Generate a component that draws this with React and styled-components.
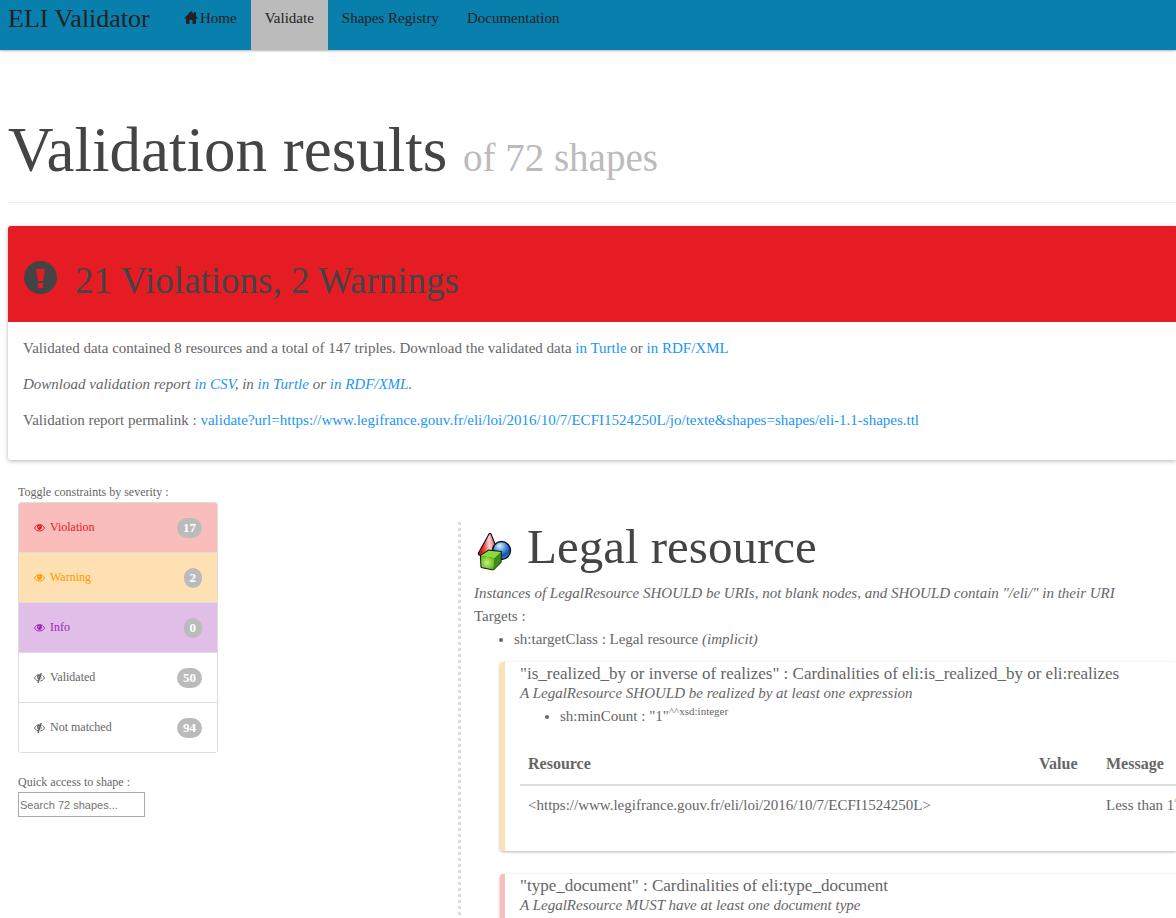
import React from 'react';
import styled, { createGlobalStyle } from 'styled-components';

const Global = createGlobalStyle`
  *, *::before, *::after { box-sizing: border-box; }
  body {
    margin: 0;
    background: #fff;
    color: #666;
    font-family: "Liberation Serif", serif;
    font-size: 15px;
    line-height: 23px;
  }
  a { color: #2196f3; text-decoration: none; }
  p, h1, h2, h3, ul { margin: 0; }
`;

const Page = styled.div`
  overflow-x: hidden;
`;

const Navbar = styled.nav`
  display: flex;
  height: 50px;
  padding-left: 8px;
  background: #087fac;
  box-shadow: 0 1px 2px rgba(0, 0, 0, 0.3);
`;

const Brand = styled.a`
  width: 162px;
  padding-top: 7px;
  color: #222;
  font-size: 26px;
  white-space: nowrap;
`;

const NavLink = styled.a`
  display: flex;
  align-items: flex-start;
  gap: 2px;
  padding: 7px 14px;
  color: #222;
  background: ${(p) => (p.$active ? '#bbb' : 'transparent')};
  white-space: nowrap;
`;

const HomeSvg = styled.svg`
  width: 14px;
  height: 14px;
  margin-top: 4px;
`;

const Body = styled.main`
  padding-left: 8px;
`;

const PageHeader = styled.header`
  padding: 64px 0 16px;
  border-bottom: 1px solid #eee;
`;

const PageTitle = styled.h1`
  height: 72px;
  color: #444;
  font-size: 63px;
  font-weight: 400;
  line-height: 72px;
  white-space: nowrap;
`;

const Muted = styled.small`
  color: #bbb;
  font-size: 39px;
`;

const Panel = styled.section`
  margin-top: 23px;
  border-radius: 3px 0 0 3px;
  box-shadow: 0 1px 4px rgba(0, 0, 0, 0.3);
`;

const PanelHead = styled.div`
  display: flex;
  gap: 18px;
  height: 96px;
  padding: 35px 16px 0;
  border-radius: 3px 0 0 0;
  background: #e51c23;
  color: #444;
`;

const AlertSvg = styled.svg`
  width: 33px;
  height: 33px;
`;

const PanelTitle = styled.h2`
  font-size: 37px;
  font-weight: 400;
  line-height: 40px;
`;

const PanelBody = styled.div`
  display: flex;
  flex-direction: column;
  gap: 13px;
  padding: 15px 15px 28px;
`;

const Columns = styled.div`
  display: flex;
  margin-top: 21px;
`;

const Sidebar = styled.aside`
  flex: 0 0 450px;
  padding: 1px 0 0 10px;
  font-size: 12px;
`;

const SeverityList = styled.div`
  width: 200px;
  margin-bottom: 19px;
  border: 1px solid #ddd;
  border-radius: 3px;
  overflow: hidden;
`;

const SeverityItem = styled.button`
  display: flex;
  align-items: center;
  gap: 5px;
  width: 100%;
  height: 50px;
  padding: 0 15px;
  border: 0;
  border-bottom: 1px solid #ddd;
  background: ${(p) => p.$bg};
  color: ${(p) => p.$fg};
  font: inherit;
  text-align: left;
  &:last-child { height: 49px; border-bottom: 0; }
`;

const EyeSvg = styled.svg`
  width: 11px;
  height: 10px;
`;

const Badge = styled.span`
  margin-left: auto;
  padding: 0 6px;
  border-radius: 10px;
  background: #bbb;
  color: #fff;
  font-size: 13px;
  font-weight: 700;
  line-height: 20px;
`;

const Caption = styled.label`
  display: block;
  line-height: 20px;
`;

const Search = styled.input`
  display: block;
  width: 127px;
  height: 25px;
  padding: 1px;
  border: 1px solid #a9a9a9;
  font-family: "Liberation Sans", sans-serif;
  font-size: 11px;
  &::placeholder { color: #757575; }
`;

const Shape = styled.section`
  flex: 1;
  min-width: 0;
  margin-top: 41px;
  padding-left: 16px;
  background: repeating-linear-gradient(to bottom, #ddd 0 3px, transparent 3px 6px) left top / 3px 100% no-repeat;
`;

const ShapeHead = styled.div`
  display: flex;
  align-items: center;
  gap: 13px;
  height: 60px;
  padding: 0 0 10px 2px;
`;

const ShapeTitle = styled.h2`
  color: #444;
  font-size: 49px;
  font-weight: 400;
  line-height: 50px;
`;

const ShapesSvg = styled.svg`
  flex: none;
  width: 38px;
  height: 40px;
  margin-top: 12px;
`;

const Description = styled.p`
  line-height: ${(p) => (p.$tight ? '18px' : '23px')};
  font-style: italic;
`;

const Bullets = styled.ul`
  padding-left: 40px;
`;

const Constraint = styled.article`
  min-height: 189px;
  margin: 11px 0 23px 26px;
  padding: 2px 0 0 15px;
  border-left: 5px solid ${(p) => p.$accent};
  border-radius: 3px 0 0 3px;
  box-shadow: 0 1px 3px rgba(0, 0, 0, 0.3);

  ${Bullets} { margin-top: 3px; }
`;

const ConstraintTitle = styled.h3`
  font-size: 17px;
  font-weight: 400;
  line-height: 20px;
`;

const Sup = styled.sup`
  font-size: 11px;
  line-height: 0;
`;

const Results = styled.table`
  width: 100%;
  margin-top: 14px;
  border-collapse: collapse;
  table-layout: fixed;
`;

const Th = styled.th`
  width: ${(p) => p.$w || 'auto'};
  height: 43px;
  padding: 0 8px;
  border-bottom: 2px solid #ddd;
  font-size: 16px;
  text-align: left;
`;

const Td = styled.td`
  height: 40px;
  padding: 0 8px;
  white-space: nowrap;
`;

const severities = [
  { name: 'Violation', count: 17, bg: '#f9bdbb', fg: '#e51c23', open: true },
  { name: 'Warning', count: 2, bg: '#ffe0b2', fg: '#ff9800', open: true },
  { name: 'Info', count: 0, bg: '#e1bee7', fg: '#9c27b0', open: true },
  { name: 'Validated', count: 50, bg: '#fff', fg: '#666', open: false },
  { name: 'Not matched', count: 94, bg: '#fff', fg: '#666', open: false },
];

const Eye = ({ open }) => (
  <EyeSvg viewBox="0 0 22 20" aria-hidden="true">
    <path d="M1 10C5 1 17 1 21 10C17 18 5 18 1 10Z" fill="none" stroke="currentColor" strokeWidth="2" />
    <path d="M7 4H15Q17 8 15 11Q13 14 11 14Q9 14 7 11Q5 8 7 4Z" fill="currentColor" />
    <path d="M8.5 9Q9 6.5 11 6.5" fill="none" stroke="#fff" strokeOpacity="0.8" strokeWidth="1.4" />
    {!open && <path d="M14.5 0L8 20" stroke="currentColor" strokeWidth="3" />}
    {!open && <path d="M17 1L10.5 20" stroke="#fff" strokeWidth="1.6" />}
  </EyeSvg>
);

const ShapesLogo = () => (
  <ShapesSvg viewBox="0 0 38 40" aria-hidden="true">
    <defs>
      <linearGradient id="cone" x1="0" y1="0.6" x2="1" y2="0.5">
        <stop offset="0" stopColor="#c80000" />
        <stop offset="0.3" stopColor="#f04040" />
        <stop offset="0.6" stopColor="#ffd8d8" />
        <stop offset="1" stopColor="#d03030" />
      </linearGradient>
      <radialGradient id="ball" cx="0.4" cy="0.25" r="0.75">
        <stop offset="0" stopColor="#e4f2ff" />
        <stop offset="0.4" stopColor="#5a9ce8" />
        <stop offset="0.75" stopColor="#1450b8" />
        <stop offset="1" stopColor="#3c8cf0" />
      </radialGradient>
      <radialGradient id="front" cx="0.45" cy="0.5" r="0.65">
        <stop offset="0" stopColor="#c4f078" />
        <stop offset="1" stopColor="#54b014" />
      </radialGradient>
    </defs>
    <path d="M13 1Q14 0 15 1L21 16L17 25L3 22Q2 21 3 19Z" fill="url(#cone)" stroke="#111" strokeWidth="1.2" />
    <circle cx="25.5" cy="17.5" r="9" fill="url(#ball)" stroke="#111" strokeWidth="1.4" />
    <path d="M4.5 22.5L12.5 17L25.5 18.5L25 29.5L17.5 37L5 34.5Z" fill="#286e08" stroke="#111" strokeWidth="1" strokeLinejoin="round" />
    <path d="M5 22.7L12.7 17.7L25 19L18.7 25.3Z" fill="#8cdc3c" />
    <path d="M5 22.7L18.7 25.3L17.5 36.5L5.5 34Z" fill="url(#front)" />
    <path d="M18.7 25.3L25 19L24.5 29.2L17.5 36.5Z" fill="#3f8f14" />
  </ShapesSvg>
);

export default function App() {
  return (
    <Page>
      <Global />
      <Navbar>
        <Brand href="#">ELI Validator</Brand>
        <NavLink href="#">
          <HomeSvg viewBox="0 0 14 14" aria-hidden="true">
            <path d="M7 0L10 3V1H12V5L14 7.5H12V13H8.5V9H5.5V13H2V7.5H0Z" fill="currentColor" />
          </HomeSvg>
          Home
        </NavLink>
        <NavLink href="#" $active>Validate</NavLink>
        <NavLink href="#">Shapes Registry</NavLink>
        <NavLink href="#">Documentation</NavLink>
      </Navbar>
      <Body>
        <PageHeader>
          <PageTitle>Validation results <Muted>of 72 shapes</Muted></PageTitle>
        </PageHeader>
        <Panel>
          <PanelHead>
            <AlertSvg viewBox="0 0 33 33" aria-hidden="true">
              <circle cx="16.5" cy="16.5" r="16.5" fill="#444" />
              <path d="M12 8H21L19 20H14ZM14 22H19V27H14Z" fill="#e51c23" />
            </AlertSvg>
            <PanelTitle>21 Violations, 2 Warnings</PanelTitle>
          </PanelHead>
          <PanelBody>
            <p>
              Validated data contained 8 resources and a total of 147 triples. Download the validated data{' '}
              <a href="#">in Turtle</a> or <a href="#">in RDF/XML</a>
            </p>
            <Description>
              Download validation report <a href="#">in CSV</a>, in <a href="#">in Turtle</a> or <a href="#">in RDF/XML</a>.
            </Description>
            <p>
              Validation report permalink :{' '}
              <a href="#">validate?url=https://www.legifrance.gouv.fr/eli/loi/2016/10/7/ECFI1524250L/jo/texte&amp;shapes=shapes/eli-1.1-shapes.ttl</a>
            </p>
          </PanelBody>
        </Panel>
        <Columns>
          <Sidebar>
            <Caption as="div">Toggle constraints by severity :</Caption>
            <SeverityList>
              {severities.map((s) => (
                <SeverityItem key={s.name} type="button" $bg={s.bg} $fg={s.fg}>
                  <Eye open={s.open} />
                  {s.name}
                  <Badge>{s.count}</Badge>
                </SeverityItem>
              ))}
            </SeverityList>
            <Caption htmlFor="shape-search">Quick access to shape :</Caption>
            <Search id="shape-search" type="text" placeholder="Search 72 shapes..." />
          </Sidebar>
          <Shape>
            <ShapeHead>
              <ShapesLogo />
              <ShapeTitle>Legal resource</ShapeTitle>
            </ShapeHead>
            <Description>
              Instances of LegalResource SHOULD be URIs, not blank nodes, and SHOULD contain "/eli/" in their URI
            </Description>
            <p>Targets :</p>
            <Bullets>
              <li>sh:targetClass : Legal resource <i>(implicit)</i></li>
            </Bullets>
            <Constraint $accent="#ffe0b2">
              <ConstraintTitle>"is_realized_by or inverse of realizes" : Cardinalities of eli:is_realized_by or eli:realizes</ConstraintTitle>
              <Description $tight>A LegalResource SHOULD be realized by at least one expression</Description>
              <Bullets>
                <li>sh:minCount : "1"<Sup>^^xsd:integer</Sup></li>
              </Bullets>
              <Results>
                <thead>
                  <tr><Th>Resource</Th><Th $w="67px">Value</Th><Th $w="78px">Message</Th></tr>
                </thead>
                <tbody>
                  <tr>
                    <Td>&lt;https://www.legifrance.gouv.fr/eli/loi/2016/10/7/ECFI1524250L&gt;</Td>
                    <Td />
                    <Td>Less than 1<Sup>^</Sup></Td>
                  </tr>
                </tbody>
              </Results>
            </Constraint>
            <Constraint $accent="#f9bdbb">
              <ConstraintTitle>"type_document" : Cardinalities of eli:type_document</ConstraintTitle>
              <Description $tight>A LegalResource MUST have at least one document type</Description>
            </Constraint>
          </Shape>
        </Columns>
      </Body>
    </Page>
  );
}
